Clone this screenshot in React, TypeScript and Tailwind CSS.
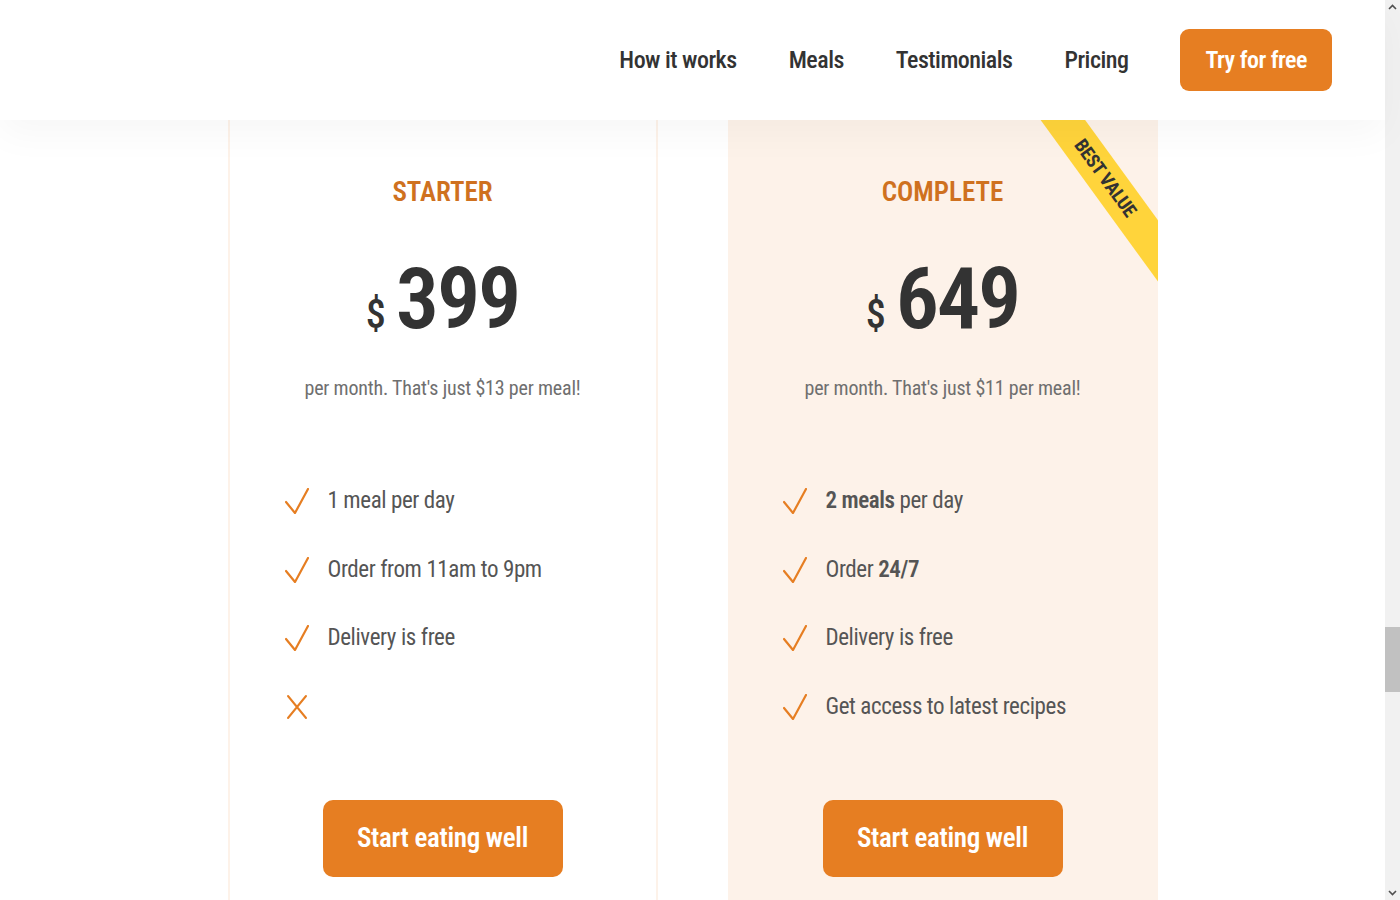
import { ReactNode } from "react";

const font = { fontFamily: "'Roboto Condensed', 'Liberation Sans Narrow', 'DejaVu Sans Condensed', Roboto, sans-serif" };

const Check = () => (
  <svg width="24" height="26" viewBox="0 0 24 26" className="shrink-0">
    <polyline points="1,14 10,25 23,1" fill="none" stroke="#e67e22" strokeWidth="2.2" strokeLinecap="round" strokeLinejoin="round" />
  </svg>
);

const Cross = () => (
  <svg width="24" height="26" viewBox="0 0 24 26" className="shrink-0">
    <path d="M3 2 L21 24 M21 2 L3 24" fill="none" stroke="#e67e22" strokeWidth="2" strokeLinecap="round" />
  </svg>
);

const Item = ({ icon, children }: { icon: ReactNode; children?: ReactNode }) => (
  <li className="flex h-[32px] items-center gap-[19px] pl-[55px] text-[23px] leading-[32px] tracking-[-0.4px] text-[#555]">
    {icon}
    <span>{children}</span>
  </li>
);

const Plan = ({ name, price, meal, complete, children }: { name: string; price: string; meal: string; complete?: boolean; children: ReactNode }) => (
  <div
    className={
      "relative flex h-[780px] w-[430px] flex-col items-center overflow-hidden pt-[56px] " +
      (complete ? "bg-[#fdf2e9]" : "border-x-2 border-[#fdf2e9]")
    }
  >
    {complete && (
      <div className="absolute left-[227px] top-[40px] flex h-[36px] w-[300px] rotate-[54deg] items-center justify-center bg-[#ffd43b] text-[19px] font-bold tracking-tight text-[#333]">
        BEST VALUE
      </div>
    )}
    <p className="text-[27px] font-semibold leading-[32px] text-[#cf711f]">{name}</p>
    <p className="mt-[48px] flex items-baseline text-[#333]">
      <span className="mr-[10px] text-[40px] font-medium leading-none">$</span>
      <span className="text-[86px] font-semibold leading-none tracking-tight">{price}</span>
    </p>
    <p className="mt-[32px] text-[20px] leading-[28px] tracking-[-0.2px] text-[#6f6f6f]">per month. That's just ${meal} per meal!</p>
    <ul className="mt-[83px] flex w-full flex-col gap-[36.5px]">{children}</ul>
    <button className="mt-[77px] h-[77px] w-[240px] rounded-[10px] bg-[#e67e22] text-[27px] font-semibold tracking-[-0.3px] text-white">
      Start eating well
    </button>
  </div>
);

export default function App() {
  return (
    <div className="flex h-[900px] w-[1400px] overflow-hidden bg-white" style={font}>
      <div className="flex w-[1385px] flex-col">
        <header className="relative z-10 flex h-[120px] shrink-0 items-center justify-end bg-white pr-[53px] shadow-[0_14px_36px_rgba(0,0,0,0.035)]">
          <nav className="flex items-center gap-[52px] text-[24px] font-medium tracking-[-0.5px] text-[#333]">
            <a>How it works</a>
            <a>Meals</a>
            <a>Testimonials</a>
            <a>Pricing</a>
            <a className="flex h-[62px] items-center rounded-[9px] bg-[#e67e22] px-[25px] font-semibold text-white">Try for free</a>
          </nav>
        </header>
        <main className="flex flex-1 justify-center gap-[70px]">
          <Plan name="STARTER" price="399" meal="13">
            <Item icon={<Check />}>1 meal per day</Item>
            <Item icon={<Check />}>Order from 11am to 9pm</Item>
            <Item icon={<Check />}>Delivery is free</Item>
            <Item icon={<Cross />} />
          </Plan>
          <Plan name="COMPLETE" price="649" meal="11" complete>
            <Item icon={<Check />}>
              <b className="font-semibold">2 meals</b> per day
            </Item>
            <Item icon={<Check />}>
              Order <b className="font-semibold">24/7</b>
            </Item>
            <Item icon={<Check />}>Delivery is free</Item>
            <Item icon={<Check />}>Get access to latest recipes</Item>
          </Plan>
        </main>
      </div>
      <div className="flex w-[15px] flex-col items-center bg-[#f1f1f1]">
        <svg width="9" height="6" viewBox="0 0 9 6" className="mt-[4px]">
          <path d="M1 5 L4.5 1.5 L8 5" fill="none" stroke="#505050" strokeWidth="1.6" />
        </svg>
        <div className="mt-[617px] h-[65px] w-full bg-[#c1c1c1]" />
        <div className="flex-1" />
        <svg width="9" height="6" viewBox="0 0 9 6" className="mb-[4px]">
          <path d="M1 1 L4.5 4.5 L8 1" fill="none" stroke="#505050" strokeWidth="1.6" />
        </svg>
      </div>
    </div>
  );
}
